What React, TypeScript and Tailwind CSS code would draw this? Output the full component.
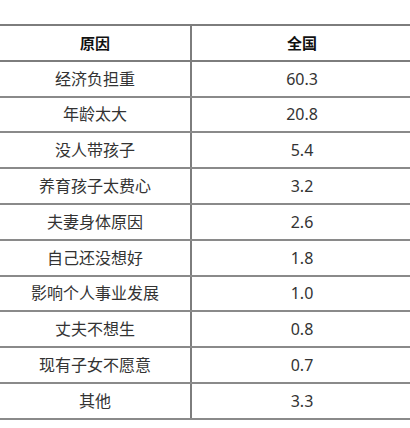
import React from 'react';

const rows: [string, string][] = [
  ['经济负担重', '60.3'],
  ['年龄太大', '20.8'],
  ['没人带孩子', '5.4'],
  ['养育孩子太费心', '3.2'],
  ['夫妻身体原因', '2.6'],
  ['自己还没想好', '1.8'],
  ['影响个人事业发展', '1.0'],
  ['丈夫不想生', '0.8'],
  ['现有子女不愿意', '0.7'],
  ['其他', '3.3'],
];

const App = () => {
  return (
    <div
      className="w-[410px] h-[428px] bg-white pt-[24px] overflow-hidden"
      style={{ fontFamily: '"Noto Sans", "Noto Sans CJK SC", sans-serif' }}
    >
      <div className="border-t-2 border-[#7d7d7d] w-[412px]">
        <div className="grid grid-cols-[192px_1fr] h-[35.8px] border-b-2 border-[#7d7d7d] text-[15px] font-bold text-[#111]">
          <div className="flex items-center justify-center border-r-2 border-[#7d7d7d]">原因</div>
          <div className="flex items-center justify-center">全国</div>
        </div>
        {rows.map(([k, v]) => (
          <div
            key={k}
            className="grid grid-cols-[192px_1fr] h-[35.8px] border-b-2 border-[#8a8a8a] text-[16px] text-[#333]"
          >
            <div className="flex items-center justify-center border-r-2 border-[#7d7d7d]">{k}</div>
            <div className="flex items-center justify-center">{v}</div>
          </div>
        ))}
      </div>
    </div>
  );
};

export default App;
